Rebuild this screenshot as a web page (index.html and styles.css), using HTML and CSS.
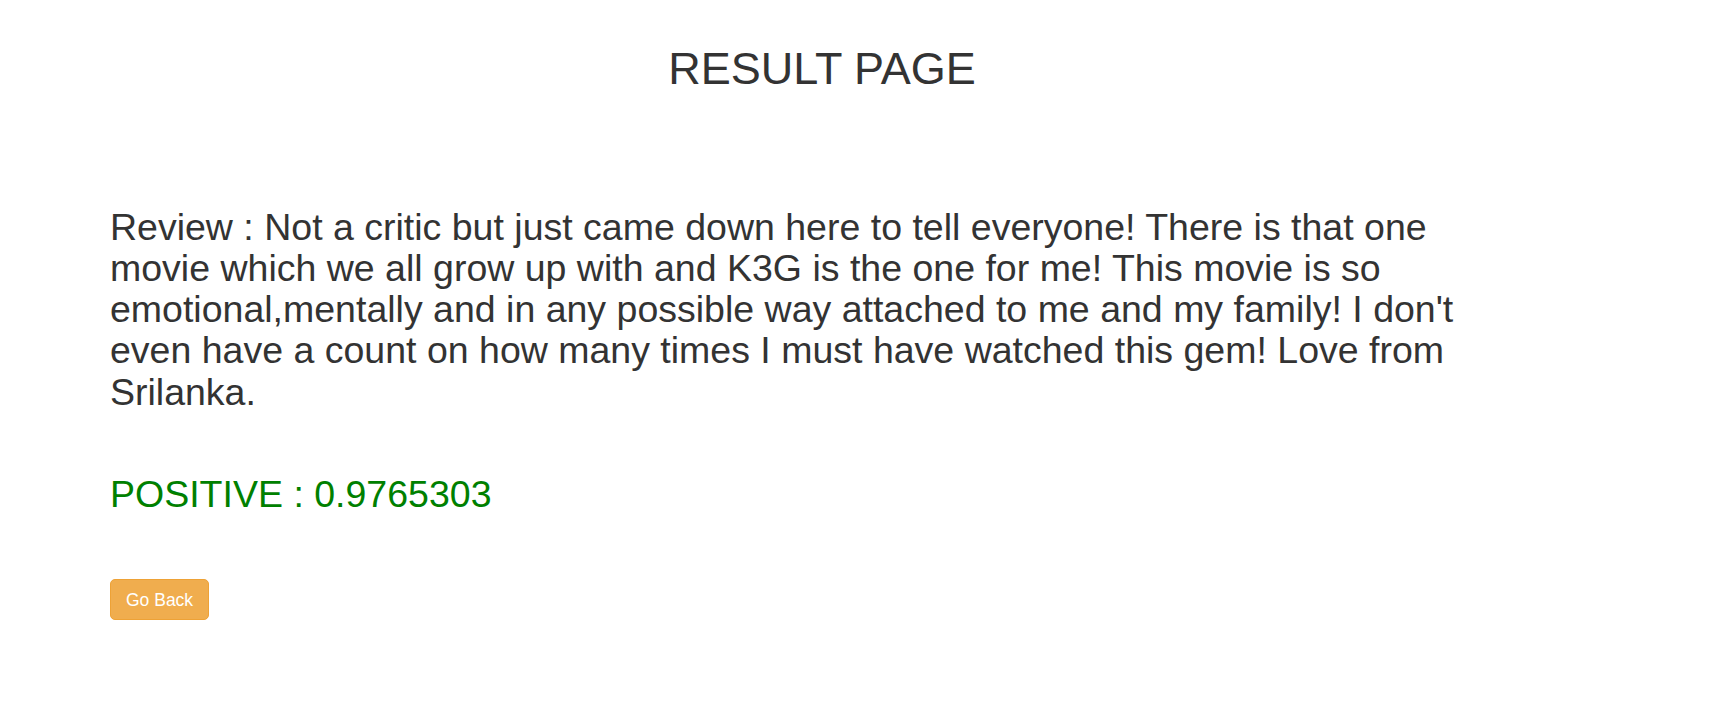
FILE: index.html
```html
<!DOCTYPE html>
<html>
<head>
<meta charset="utf-8">
<title>Result Page</title>
<link rel="stylesheet" href="styles.css">
</head>
<body>
<header class="header">
  <h1 class="title">RESULT PAGE</h1>
</header>
<main class="content">
  <h2 class="review">Review : Not a critic but just came down here to tell everyone! There is that one movie which we all grow up with and K3G is the one for me! This movie is so emotional,mentally and in any possible way attached to me and my family! I don't even have a count on how many times I must have watched this gem! Love from Srilanka.</h2>
  <h2 class="result">POSITIVE : 0.9765303</h2>
  <div class="actions">
    <a class="btn-back" href="#">Go Back</a>
  </div>
</main>
</body>
</html>
```
FILE: styles.css
```css
html, body {
  margin: 0;
  padding: 0;
  background: #fff;
}
body {
  font-family: "Liberation Sans", Arial, sans-serif;
  color: #333;
  font-size: 17.5px;
  line-height: 1.42857;
}
.header {
  padding: 44px 89px 0 0;
  text-align: center;
}
.title {
  margin: 0;
  font-size: 45px;
  font-weight: 500;
  line-height: 1.1;
}
.content {
  padding: 0 0 0 110px;
  width: 1380px;
}
.review {
  margin: 113px 0 0 0;
  font-size: 37.5px;
  font-weight: 500;
  line-height: 1.1;
}
.result {
  margin: 61px 0 0 0;
  font-size: 37.5px;
  font-weight: 500;
  line-height: 1.1;
  color: #008000;
}
.actions {
  display: flex;
  margin-top: 64px;
}
.btn-back {
  display: inline-block;
  font-size: 17.5px;
  line-height: 24px;
  padding: 7.5px 15px;
  color: #fff;
  background: #f0ad4e;
  border: 1px solid #eea236;
  border-radius: 5px;
  text-decoration: none;
}
```
